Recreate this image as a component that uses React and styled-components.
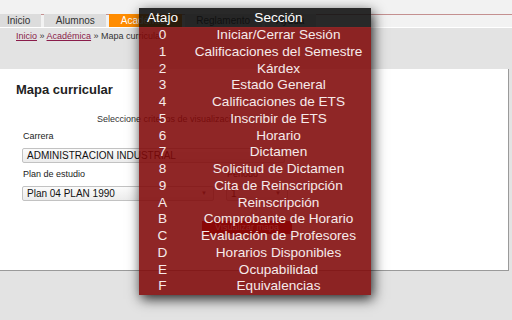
import React from "react";
import styled, { createGlobalStyle } from "styled-components";

const Global = createGlobalStyle`
  html, body { margin: 0; padding: 0; }
  body {
    width: 512px; height: 320px; overflow: hidden;
    background: #e3e3e3;
    font-family: "Liberation Sans", Arial, sans-serif;
    color: #222;
  }
`;

const Page = styled.div`
  position: relative;
  width: 512px;
  height: 320px;
`;

const TopBar = styled.div`
  height: 27px;
  border-bottom: 1px solid #ffffff;
  background: linear-gradient(#f2f2f2 14px, #c49090 14px, #c49090 15px, #f2f2f2 15px);
  display: flex;
  align-items: flex-end;
  gap: 3px;
`;

const Tab = styled.div`
  height: 13px;
  line-height: 13px;
  padding: 0 ${(p) => (p.$first ? "11px 0 7px" : "11.5px")};
  font-size: 10px;
  color: #333;
  background: ${(p) => (p.$active ? "#ff8c00" : "#dcdcdc")};
  ${(p) => p.$active && "color: #fff;"}
`;

const Crumbs = styled.div`
  padding: 0 16px;
  height: 17px;
  line-height: 17px;
  font-size: 9px;
  color: #333;
  margin-bottom: 24px;
`;

const Link = styled.span`
  color: #8a1c4a;
  text-decoration: underline;
`;

const Panel = styled.div`
  width: 509px;
  height: 202px;
  background: #fff;
  border-right: 1px solid #9a9a9a;
  border-bottom: 1px solid #9a9a9a;
  padding: 14px 0 0 16px;
  box-sizing: border-box;
`;

const Title = styled.h2`
  margin: 0;
  font-size: 13px;
  line-height: 14px;
  font-weight: bold;
  color: #222;
`;

const Subtitle = styled.div`
  margin: 17px 0 0 81px;
  font-size: 9px;
  line-height: 10px;
  color: #333;
`;

const Form = styled.div`
  margin: 7px 0 0 6px;
  display: grid;
  grid-template-columns: 192px 66px;
  column-gap: 12px;
`;

const Field = styled.div`
  grid-column: ${(p) => (p.$span ? "1 / span 2" : "auto")};
  display: flex;
  flex-direction: column;
`;

const Label = styled.div`
  font-size: 9px;
  line-height: 10px;
  height: 10px;
  margin-left: 1px;
  margin-bottom: 7px;
  margin-top: ${(p) => p.$top || 0}px;
  color: #222;
`;

const Select = styled.div`
  height: 15px;
  width: ${(p) => p.$w}px;
  box-sizing: border-box;
  border: 1px solid #c2c2c2;
  border-radius: 2px;
  background: linear-gradient(#fbfbfb, #ececec);
  font-size: 10px;
  line-height: 13px;
  padding: 0 6px 0 4px;
  color: #111;
  display: flex;
  justify-content: space-between;
  white-space: nowrap;
`;

const Arrow = styled.span`
  font-size: 6px;
  color: #555;
`;

const ButtonRow = styled.div`
  grid-column: 1 / span 2;
  display: flex;
  margin: 20px 0 0 0;
`;

const Button = styled.div`
  width: 105px;
  height: 13px;
  background: #d40000;
  color: #fff;
  font-size: 9px;
  line-height: 13px;
  text-align: center;
  margin-left: 180px;
`;

const Overlay = styled.div`
  position: absolute;
  left: 139px;
  top: 8px;
  width: 232px;
  box-shadow: 2px 4px 12px rgba(0, 0, 0, 0.85);
  font-size: 13.6px;
`;

const Head = styled.div`
  display: grid;
  grid-template-columns: 47px 1fr;
  height: 19px;
  line-height: 19px;
  background: rgba(12, 12, 12, 0.88);
  color: #fff;
  text-align: center;
`;

const Body = styled.div`
  background: rgba(128, 8, 8, 0.88);
`;

const Row = styled.div`
  display: grid;
  grid-template-columns: 47px 1fr;
  height: 16.75px;
  line-height: 16.75px;
  color: #f6eaea;
  text-align: center;
  white-space: nowrap;
`;

const rows = [
  ["0", "Iniciar/Cerrar Sesión"],
  ["1", "Calificaciones del Semestre"],
  ["2", "Kárdex"],
  ["3", "Estado General"],
  ["4", "Calificaciones de ETS"],
  ["5", "Inscribir de ETS"],
  ["6", "Horario"],
  ["7", "Dictamen"],
  ["8", "Solicitud de Dictamen"],
  ["9", "Cita de Reinscripción"],
  ["A", "Reinscripción"],
  ["B", "Comprobante de Horario"],
  ["C", "Evaluación de Profesores"],
  ["D", "Horarios Disponibles"],
  ["E", "Ocupabilidad"],
  ["F", "Equivalencias"],
];

export default function App() {
  return (
    <Page>
      <Global />
      <TopBar>
        <Tab $first>Inicio</Tab>
        <Tab>Alumnos</Tab>
        <Tab $active>Académica</Tab>
        <Tab>Reglamento</Tab>
        <Tab>Ayuda</Tab>
      </TopBar>
      <Crumbs>
        <Link>Inicio</Link> » <Link>Académica</Link> » Mapa curricular
      </Crumbs>
      <Panel>
        <Title>Mapa curricular</Title>
        <Subtitle>Seleccione criterios de visualización</Subtitle>
        <Form>
          <Field $span>
            <Label>Carrera</Label>
            <Select $w={263}>ADMINISTRACION INDUSTRIAL</Select>
          </Field>
          <Field>
            <Label $top={6}>Plan de estudio</Label>
            <Select $w={192}>
              Plan 04 PLAN 1990 <Arrow>▼</Arrow>
            </Select>
          </Field>
          <Field>
            <Label $top={6}>Periodo</Label>
            <Select $w={62}>
              1 <Arrow>▼</Arrow>
            </Select>
          </Field>
          <ButtonRow>
            <Button>Visualizar mapa</Button>
          </ButtonRow>
        </Form>
      </Panel>
      <Overlay>
        <Head>
          <span>Atajo</span>
          <span>Sección</span>
        </Head>
        <Body>
          {rows.map(([k, s]) => (
            <Row key={k}>
              <span>{k}</span>
              <span>{s}</span>
            </Row>
          ))}
        </Body>
      </Overlay>
    </Page>
  );
}
